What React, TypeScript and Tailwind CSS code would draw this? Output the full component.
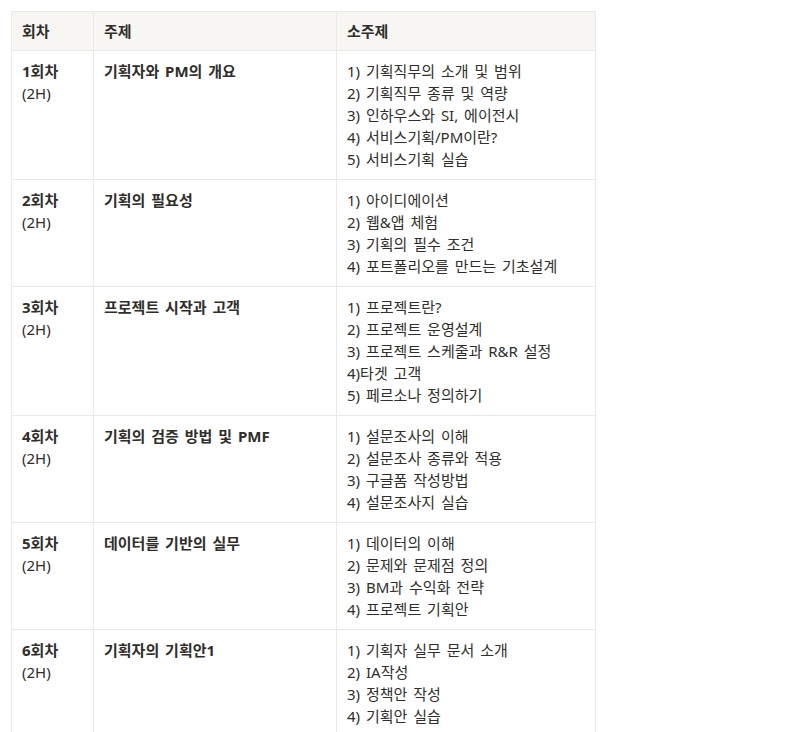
import React from "react";

const rows = [
  { n: "1회차", t: "기획자와 PM의 개요", s: ["1) 기획직무의 소개 및 범위", "2) 기획직무 종류 및 역량", "3) 인하우스와 SI, 에이전시", "4) 서비스기획/PM이란?", "5) 서비스기획 실습"] },
  { n: "2회차", t: "기획의 필요성", s: ["1) 아이디에이션", "2) 웹&앱 체험", "3) 기획의 필수 조건", "4) 포트폴리오를 만드는 기초설계"] },
  { n: "3회차", t: "프로젝트 시작과 고객", s: ["1) 프로젝트란?", "2) 프로젝트 운영설계", "3) 프로젝트 스케줄과 R&R 설정", "4)타겟 고객", "5) 페르소나 정의하기"] },
  { n: "4회차", t: "기획의 검증 방법 및 PMF", s: ["1) 설문조사의 이해", "2) 설문조사 종류와 적용", "3) 구글폼 작성방법", "4) 설문조사지 실습"] },
  { n: "5회차", t: "데이터를 기반의 실무", s: ["1) 데이터의 이해", "2) 문제와 문제점 정의", "3) BM과 수익화 전략", "4) 프로젝트 기획안"] },
  { n: "6회차", t: "기획자의 기획안1", s: ["1) 기획자 실무 문서 소개", "2) IA작성", "3) 정책안 작성", "4) 기획안 실습"] },
];

const cell = "border border-[#e9e9e7] px-[10px] align-top";

export default function App() {
  return (
    <div
      className="bg-white w-[812px] h-[732px] overflow-hidden pt-[11px] pl-[11px] text-[#2f2e2a] text-[15px] leading-[22px] [word-spacing:2px]"
      style={{ fontFamily: '"Noto Sans", "Noto Sans CJK KR", sans-serif' }}
    >
      <table className="border-collapse w-[584px] table-fixed">
        <colgroup>
          <col className="w-[82px]" />
          <col className="w-[243px]" />
          <col className="w-[259px]" />
        </colgroup>
        <thead>
          <tr className="bg-[#f7f6f3]">
            <th className={`${cell} py-[8px] text-left font-bold`}>회차</th>
            <th className={`${cell} py-[8px] text-left font-bold`}>주제</th>
            <th className={`${cell} py-[8px] text-left font-bold`}>소주제</th>
          </tr>
        </thead>
        <tbody>
          {rows.map((r) => (
            <tr key={r.n}>
              <td className={`${cell} py-[9px]`}>
                <div className="font-bold">{r.n}</div>
                <div>(2H)</div>
              </td>
              <td className={`${cell} py-[9px] font-bold`}>{r.t}</td>
              <td className={`${cell} py-[9px]`}>
                {r.s.map((x) => (
                  <div key={x}>{x}</div>
                ))}
              </td>
            </tr>
          ))}
        </tbody>
      </table>
    </div>
  );
}
